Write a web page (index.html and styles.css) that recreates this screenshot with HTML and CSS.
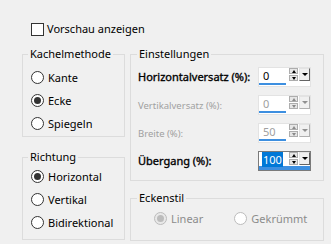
FILE: index.html
```html
<!DOCTYPE html>
<html lang="de">
<head>
<meta charset="utf-8">
<title>Kacheln</title>
<link rel="stylesheet" href="styles.css">
</head>
<body>
<div class="dlg">
  <div class="preview"><span class="chk"></span><span>Vorschau anzeigen</span></div>
  <div class="cols">
    <div class="col">
      <fieldset class="grp g-kachel">
        <legend>Kachelmethode</legend>
        <div class="opt"><span class="radio"></span><span>Kante</span></div>
        <div class="opt"><span class="radio on"></span><span>Ecke</span></div>
        <div class="opt"><span class="radio"></span><span>Spiegeln</span></div>
      </fieldset>
      <fieldset class="grp g-richt">
        <legend>Richtung</legend>
        <div class="opt"><span class="radio on"></span><span>Horizontal</span></div>
        <div class="opt"><span class="radio"></span><span>Vertikal</span></div>
        <div class="opt"><span class="radio"></span><span>Bidirektional</span></div>
      </fieldset>
    </div>
    <div class="col">
      <fieldset class="grp g-einst">
        <legend>Einstellungen</legend>
        <div class="row">
          <span class="lbl strong">Horizontalversatz (%):</span>
          <div class="spin"><span class="val">0</span><span class="ud"><span class="b up"></span><span class="b dn"></span></span><span class="dd"></span></div>
        </div>
        <div class="row off">
          <span class="lbl">Vertikalversatz (%):</span>
          <div class="spin"><span class="val">0</span><span class="ud"><span class="b up"></span><span class="b dn"></span></span><span class="dd"></span></div>
        </div>
        <div class="row off">
          <span class="lbl">Breite (%):</span>
          <div class="spin"><span class="val">50</span><span class="ud"><span class="b up"></span><span class="b dn"></span></span><span class="dd"></span></div>
        </div>
        <div class="row focus">
          <span class="lbl strong">Übergang (%):</span>
          <div class="spin"><span class="val"><span class="sel">100</span></span><span class="ud"><span class="b up"></span><span class="b dn"></span></span><span class="dd"></span></div>
        </div>
      </fieldset>
      <fieldset class="grp g-eck">
        <legend>Eckenstil</legend>
        <div class="hopts">
          <div class="opt dis"><span class="radio on"></span><span>Linear</span></div>
          <div class="opt dis"><span class="radio"></span><span>Gekrümmt</span></div>
        </div>
      </fieldset>
    </div>
  </div>
</div>
</body>
</html>
```
FILE: styles.css
```css
html, body {
  margin: 0;
  padding: 0;
  background: #f0f0f0;
}
body {
  font-family: "Noto Sans", "Open Sans", sans-serif;
  font-size: 11px;
  color: #000;
  width: 331px;
  height: 244px;
  overflow: hidden;
}
.dlg {
  padding: 21px 0 0 22px;
}
.preview {
  display: flex;
  align-items: center;
  height: 16px;
  padding-left: 9px;
  gap: 3px;
  margin-bottom: 9px;
  line-height: 16px;
}
.chk {
  width: 13px;
  height: 13px;
  box-sizing: border-box;
  border: 1px solid #333;
  background: #fff;
}
.cols {
  display: flex;
  gap: 5px;
}
.col {
  display: flex;
  flex-direction: column;
}
.col:first-child { width: 103px; }
.col:last-child { width: 194px; }
.grp {
  margin: 0;
  border: 1px solid #dcdcdc;
  padding: 0 0 0 5px;
  min-width: 0;
}
.grp legend {
  padding: 0 2px;
  line-height: 16px;
  height: 16px;
}
.opt {
  display: flex;
  align-items: center;
  height: 23px;
  gap: 4px;
  padding-left: 3px;
  line-height: 16px;
}
.radio {
  width: 13px;
  height: 13px;
  box-sizing: border-box;
  border: 1px solid #333;
  border-radius: 50%;
  background: #fff;
  display: flex;
  align-items: center;
  justify-content: center;
  flex: none;
}
.radio.on::after {
  content: "";
  width: 7px;
  height: 7px;
  border-radius: 50%;
  background: #333;
}
.g-kachel { padding-top: 4px; padding-bottom: 1px; }
.g-richt { margin-top: 12px; padding-bottom: 5px; }
.g-einst { padding: 4px 12px 2px 7px; }
.g-einst legend { margin-left: -1px; }
.g-eck { margin-top: 9px; padding: 1px 0 10px 0; }
.g-eck legend { margin-left: 6px; }
.row {
  display: flex;
  justify-content: space-between;
  height: 28px;
  padding-top: 1px;
  box-sizing: border-box;
}
.lbl {
  line-height: 16px;
  padding-top: 2px;
}
.strong {
  -webkit-text-stroke: 0.35px #000;
}
.off .lbl {
  color: #a0a0a0;
  font-size: 9.5px;
  padding-top: 3px;
}
.spin {
  display: flex;
  width: 53px;
  height: 20px;
  box-sizing: border-box;
  background: #fff;
  border: 1px solid #e3e3e3;
}
.val {
  width: 23px;
  height: 15px;
  padding-left: 4px;
  line-height: 16px;
  border-bottom: 2px solid #3d8fe0;
  overflow: hidden;
}
.off .val { color: #a0a0a0; }
.sel {
  background: #0078d7;
  color: #fff;
  padding: 0 1px;
  margin-left: -1px;
}
.focus .spin {
  border-color: #7a7a7a;
  box-shadow: inset 0 -4px 0 #3d8fe0;
}
.focus .val { border-bottom: 0; height: 17px; }
.ud {
  display: flex;
  flex-direction: column;
  margin-left: 3px;
  width: 9px;
}
.b {
  height: 6px;
  box-sizing: border-box;
  border: 1px solid #adadad;
  background: #e6e6e6;
  display: flex;
  align-items: center;
  justify-content: center;
}
.b.dn { margin-top: 1px; }
.b::after {
  content: "";
  border-left: 2.5px solid transparent;
  border-right: 2.5px solid transparent;
}
.b.up::after { border-bottom: 3px solid #000; }
.b.dn::after { border-top: 3px solid #000; }
.dd {
  width: 11px;
  height: 13px;
  margin-left: 1px;
  box-sizing: border-box;
  border: 1px solid #e3e3e3;
  border-right-color: #646464;
  border-bottom-color: #646464;
  background: #f0f0f0;
  display: flex;
  align-items: center;
  justify-content: center;
}
.dd::after {
  content: "";
  border-left: 3px solid transparent;
  border-right: 3px solid transparent;
  border-top: 3px solid #000;
}
.off .b::after { opacity: 0.4; }
.off .dd::after { opacity: 0.4; }
.off .dd { border-right-color: #b0b0b0; border-bottom-color: #b0b0b0; }
.hopts {
  display: flex;
  padding-left: 20px;
  gap: 28px;
}
.dis { color: #8c8c8c; }
.dis .radio { border-color: #bcbcbc; background: #fff; }
.dis .radio.on { background: #e8e8e8; }
.dis .radio.on::after { background: #bcbcbc; }
```
